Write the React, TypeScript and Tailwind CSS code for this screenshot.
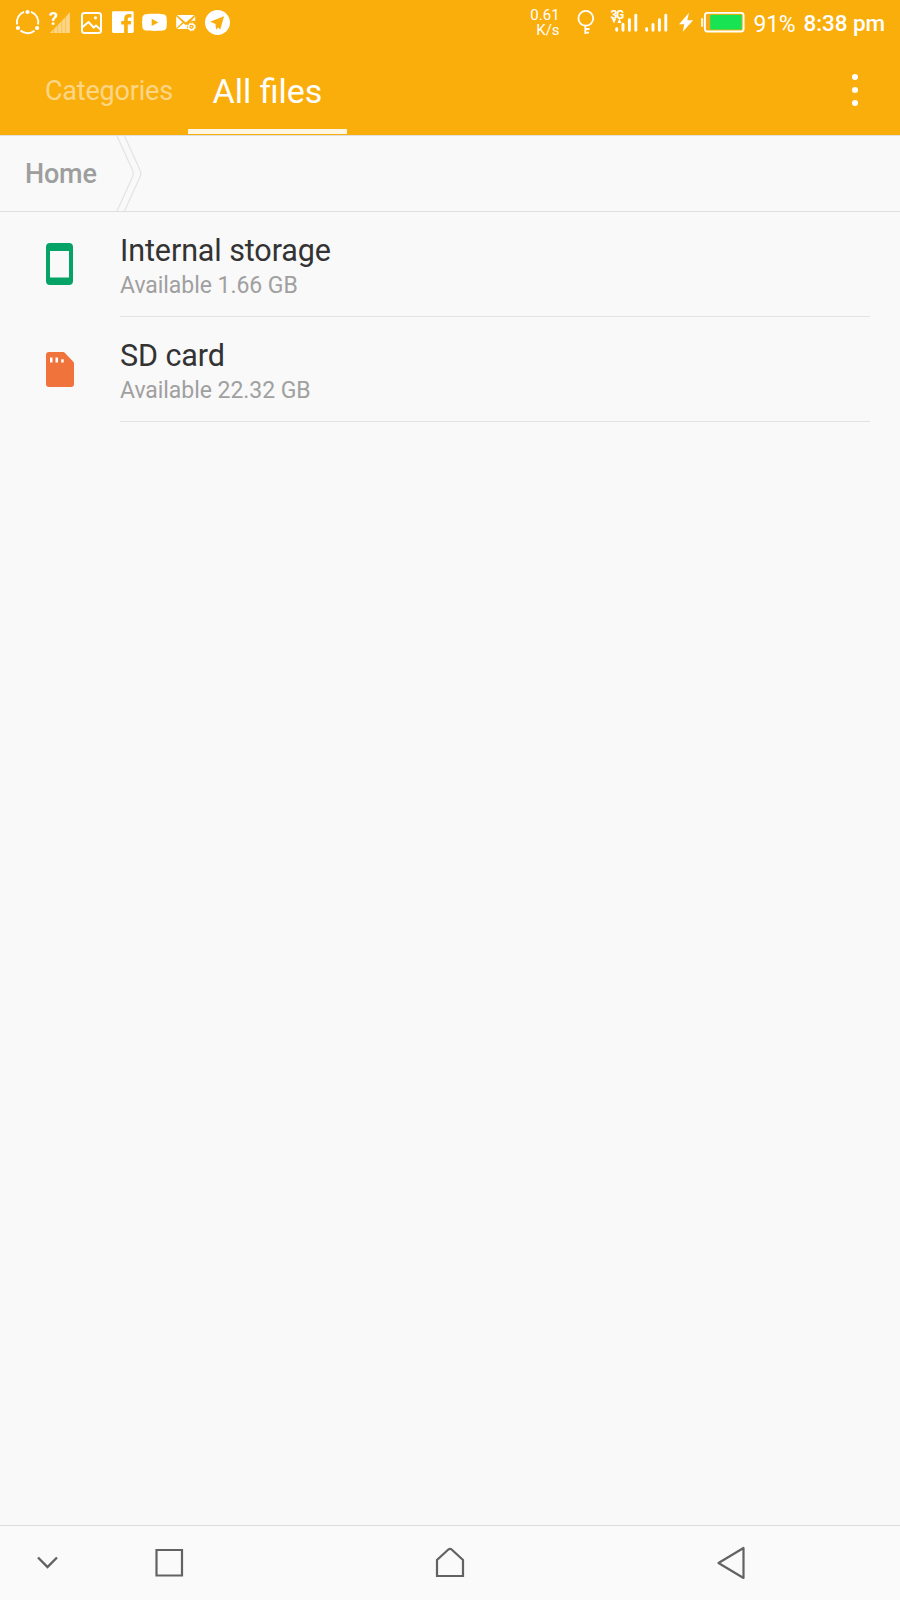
import { ReactNode } from "react";

const volumes = [
  { name: "Internal storage", available: "1.66 GB", icon: <PhoneIcon /> },
  { name: "SD card", available: "22.32 GB", icon: <SdCardIcon /> },
];

function PhoneIcon() {
  return (
    <svg className="mb-px mr-px" width="27" height="42" viewBox="0 0 27 42">
      <path
        fill="#06a367"
        fillRule="evenodd"
        d="M4 0h19a4 4 0 0 1 4 4v34a4 4 0 0 1-4 4H4a4 4 0 0 1-4-4V4a4 4 0 0 1 4-4ZM4 8v26.500h19V8Z"
      />
    </svg>
  );
}

function SdCardIcon() {
  return (
    <svg width="28" height="35" viewBox="0 0 28 35">
      <path fill="#f0733c" d="M3 0h15l10 10.500v21.500a3 3 0 0 1-3 3H3a3 3 0 0 1-3-3V3a3 3 0 0 1 3-3Z" />
      <path fill="#fff" d="M4 5.500h2.500v5H4zM9.500 5.500H12v5H9.500zM15.200 7.200h2.500v3.300h-2.500z" />
    </svg>
  );
}

function Bars({ className }: { className?: string }) {
  return (
    <svg className={className} width="24" height="45" viewBox="0 0 24 45" stroke="#fff" strokeWidth="2.900" strokeLinecap="round">
      <path d="M1.700 28.800v1.400M8 24.500v5.700M14.400 19.800v10.400M20.800 15.200v15" />
    </svg>
  );
}

function StatusIcons() {
  return (
    <div className="flex h-full items-center">
      {/* sharing ring */}
      <svg className="ml-[14px]" width="28" height="45" viewBox="0 0 28 45" fill="none" stroke="#fff" strokeWidth="1.900">
        <path d="M17 11.900A10.800 10.800 0 0 1 24 24.500M20.500 30.800A10.800 10.800 0 0 1 6.500 30.500M3.200 24.500A10.800 10.800 0 0 1 10 11.900" />
        <g fill="#fff" stroke="none">
          <circle cx="13.500" cy="12" r="2.100" />
          <circle cx="3.900" cy="28" r="2.100" />
          <circle cx="23.100" cy="28" r="2.100" />
        </g>
      </svg>
      {/* no sim */}
      <div className="relative ml-[7px] h-full w-[22px]">
        <svg width="22" height="45" viewBox="0 0 22 45" fill="#fff">
          <g opacity=".5">
            <path d="M1 33 4 30v3zM5.200 28.800l3-3V33h-3zM9.200 24.800l3-3V33h-3zM13.200 20.800l3-3V33h-3zM17.200 16.500l3.600-4V33h-3.600z" />
            <path opacity=".5" d="M1 33 20.800 12.500V33z" />
          </g>
        </svg>
        <span className="absolute left-0 top-[9px] text-[18px] font-bold leading-[19px]">?</span>
      </div>
      {/* screenshot */}
      <svg className="ml-[9px]" width="23" height="45" viewBox="0 0 23 45" fill="none" stroke="#fff" strokeWidth="2">
        <rect x="2" y="13" width="19" height="20" rx="2.500" />
        <path d="m2 27.500 6.500-5.500 5.200 5.500 2.300-2 5 4.500" />
        <circle cx="15.500" cy="17.800" r="1.600" fill="#fff" stroke="none" />
      </svg>
      {/* facebook */}
      <svg className="ml-[9px]" width="23" height="45" viewBox="0 0 23 45" fill="#fff">
        <path d="M1.300 11.300h19.100a1.300 1.300 0 0 1 1.300 1.300v19a1.300 1.300 0 0 1-1.300 1.300h-4.600v-8.400h3l.5-3.400h-3.500v-2.100c0-1 .4-1.600 1.700-1.600h1.900v-3.100c-.4-.1-1.500-.2-2.700-.2-2.800 0-4.500 1.600-4.500 4.500v2.500H9.200v3.400h2.900v8.400H1.300A1.300 1.300 0 0 1 0 31.600v-19a1.300 1.300 0 0 1 1.300-1.300Z" />
      </svg>
      {/* youtube */}
      <svg className="ml-[7px]" width="25" height="45" viewBox="0 0 25 45" fill="#fff">
        <path
          fillRule="evenodd"
          d="M4 14.200c4.500-.5 12.500-.5 17 0 2.200.2 3.300 1.300 3.600 3.500.4 3 .4 6.200 0 9.300-.3 2.200-1.400 3.300-3.600 3.500-4.500.5-12.500.5-17 0-2.200-.2-3.300-1.300-3.600-3.500-.4-3-.4-6.300 0-9.300.3-2.200 1.400-3.300 3.600-3.500ZM9.700 18.800v7.300l6.600-3.600z"
        />
      </svg>
      {/* mail with settings */}
      <svg className="ml-[9px]" width="21" height="45" viewBox="0 0 21 45" fill="#fff">
        <path d="M1 15h17.500l-8.700 7.500zM.2 16.300l6.300 6-6.300 6zM19.200 16.300v4.800c-2.300-.7-4 0-5.200 1.400zM7.600 23.300l2.200 1.900 2.100-1.700c-.6 1-1 1.600-1 2.800 0 1 .2 2 .7 2.800H1z" />
        <circle cx="15.500" cy="26.800" r="2.900" fill="none" stroke="#fff" strokeWidth="1.500" />
        <circle cx="15.500" cy="26.800" r="3.900" fill="none" stroke="#fff" strokeWidth="1" strokeDasharray="1.500 1.560" />
        <circle cx="15.500" cy="26.800" r=".8" />
      </svg>
      {/* telegram */}
      <svg className="ml-[8px]" width="25" height="45" viewBox="0 0 25 45">
        <circle cx="12.500" cy="22.500" r="12.500" fill="#fff" />
        <path fill="#faae0c" d="M19 16.200 5 21.800l5.500 2.100.7 5.800 2.200-2.700z" />
        <path fill="#faae0c" d="m19 16.200-3.700 13.300-4.800-4.200z" />
      </svg>
    </div>
  );
}

function StatusBar() {
  return (
    <div className="flex h-[45px] items-center justify-between">
      <StatusIcons />
      <div className="flex h-full items-center">
        <div className="pt-px text-right text-[15px] leading-[15px]">
          <div>0.61</div>
          <div>K/s</div>
        </div>
        {/* vpn key */}
        <svg className="ml-[17px] mr-px" width="18" height="45" viewBox="0 0 18 45" fill="none" stroke="#fff" strokeWidth="1.800">
          <circle cx="8.800" cy="18.300" r="7.400" />
          <path d="M8.300 25.500v8.500M8.300 29h4.200M8.300 32.600h3.700" />
        </svg>
        <div className="relative ml-[15px] h-full w-[27px]">
          <Bars className="ml-[4px]" />
          <span className="absolute left-0 top-[9px] text-[12px] font-bold leading-[13px] tracking-[-1.5px]">3G</span>
          <svg className="absolute left-px top-[18px]" width="10" height="6" viewBox="0 0 10 6" fill="#fff">
            <path d="M0 1h4L2 5.500zM5.500 5 7.500.5l2 4.500z" />
          </svg>
        </div>
        <Bars className="ml-[7px]" />
        <svg className="ml-[10px]" width="15" height="45" viewBox="0 0 15 45" fill="#fff">
          <path d="M10 12.800 0 24.300h5.300L3.700 31.800 14.200 20.300H8.300z" />
        </svg>
        <svg className="ml-[7px]" width="44" height="45" viewBox="0 0 44 45">
          <rect x="0" y="18" width="2.200" height="9" rx="1" fill="#fff" opacity=".85" />
          <rect x="3.900" y="12.900" width="38.700" height="18.600" rx="2.500" fill="none" stroke="#fff" strokeWidth="1.900" />
          <rect x="5.500" y="14.500" width="4" height="15.300" fill="#f6a81a" />
          <rect x="9.200" y="14.800" width="31.500" height="14.800" fill="#17e353" />
        </svg>
        <span className="ml-[9px] w-[42px] whitespace-nowrap pt-[3px] text-[23px] leading-none tracking-[-0.3px]">91%</span>
        <span className="ml-[8px] mr-[15px] whitespace-nowrap pt-[2px] text-[22.5px] font-medium leading-none tracking-[-0.1px]">
          8:38 pm
        </span>
      </div>
    </div>
  );
}

function NavButton({ children, className }: { children: ReactNode; className: string }) {
  return (
    <button className={className}>
      <svg width="34" height="34" viewBox="0 0 34 34" fill="none" stroke="#626262" strokeWidth="2.200">
        {children}
      </svg>
    </button>
  );
}

export default function App() {
  return (
    <div className="flex h-[1600px] w-[900px] flex-col overflow-hidden bg-[#f9f9f9] font-['Roboto',sans-serif]">
      <header className="h-[135px] bg-[#faae0c] text-white">
        <StatusBar />
        <div className="flex h-[90px] justify-between">
          <div className="flex">
            <button className="ml-[45px] w-[143px] text-left text-[27px] leading-[92px] tracking-[-0.2px] text-white/50">
              Categories
            </button>
            <button className="flex w-[159px] flex-col items-center">
              <span className="h-[84px] text-[34px] leading-[92px]">All files</span>
              <span className="h-[5px] w-full bg-[#fff6e3]" />
            </button>
          </div>
          <button className="mr-[42px]">
            <svg width="6" height="34" viewBox="0 0 6 34" fill="#fff">
              <circle cx="3" cy="4" r="3" />
              <circle cx="3" cy="17" r="3" />
              <circle cx="3" cy="30" r="3" />
            </svg>
          </button>
        </div>
      </header>

      <nav className="flex h-[77px] items-center border-y border-[#e0e0e0]">
        <span className="w-[91px] pl-[25px] pt-[2px] text-[27px] font-medium tracking-[-0.2px] text-[#9e9e9e]">Home</span>
        <svg className="ml-[25px]" width="28" height="75" viewBox="0 0 28 75" fill="none" stroke="#e3e3e3" strokeWidth="1.200">
          <path d="M1 0 16.500 34Q18 37.500 16.500 41L1 75M8.500 0 24 34Q25.800 37.500 24 41L8.500 75" />
        </svg>
      </nav>

      <main className="flex-1">
        {volumes.map((volume) => (
          <div key={volume.name} className="flex h-[105px]">
            <div className="flex w-[120px] items-center justify-center">{volume.icon}</div>
            <div className="mr-[30px] flex-1 border-b border-[#e3e3e3] pt-[21px]">
              <div className="text-[30.5px] leading-[36px] tracking-[-0.1px] text-[#333]">{volume.name}</div>
              <div className="mt-[3px] text-[23px] leading-[28px] tracking-[-0.05px] text-[#a0a0a0]">
                Available {volume.available}
              </div>
            </div>
          </div>
        ))}
      </main>

      <footer className="flex h-[75px] items-center border-t border-[#dcdcdc] bg-[#fafafa]">
        <NavButton className="ml-[30px]">
          <path d="m8 11.500 9.500 9.500 9.500-9.500" strokeWidth="2.400" />
        </NavButton>
        <NavButton className="ml-[88px]">
          <path d="M4.500 4h25.500v25.500h-25.500z" />
        </NavButton>
        <NavButton className="ml-[247px]">
          <path d="M4 30V14L15.600 3.300q1.400-1 2.800 0L30 14v16z" />
        </NavButton>
        <NavButton className="ml-[247px]">
          <path d="M29.500 2v30L4.500 17z" strokeLinejoin="round" />
        </NavButton>
      </footer>
    </div>
  );
}
